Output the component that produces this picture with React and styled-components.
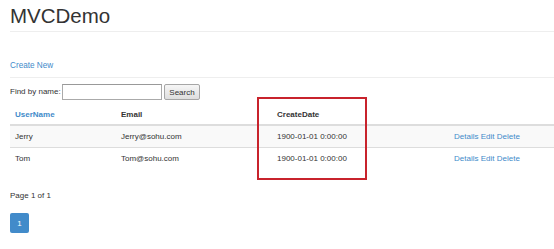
import React from 'react'
import styled, { createGlobalStyle } from 'styled-components';

const GlobalStyle = createGlobalStyle`
    body {
        margin: 0;
        background: #fff;
        font-family: "Liberation Sans", Arial, sans-serif;
        font-size: 8px;
        color: #333;
    }
`

const users = [
    { name: 'Jerry', email: 'Jerry@sohu.com', date: '1900-01-01 0:00:00' },
    { name: 'Tom', email: 'Tom@sohu.com', date: '1900-01-01 0:00:00' },
]

function App() {
    return (
        <Page>
            <GlobalStyle />
            <Title>MVCDemo</Title>
            <Rule />
            <CreateLink href="#">Create New</CreateLink>
            <Rule $top={6} />
            <SearchRow>
                <Label>Find by name:</Label>
                <Input type="text" />
                <Button>Search</Button>
            </SearchRow>
            <Grid>
                <colgroup>
                    <Col $w={106} />
                    <Col $w={156} />
                    <Col $w={177} />
                    <Col />
                </colgroup>
                <thead>
                    <tr>
                        <Th><HeadLink href="#">UserName</HeadLink></Th>
                        <Th>Email</Th>
                        <Th>CreateDate</Th>
                        <Th />
                    </tr>
                </thead>
                <tbody>
                    {users.map((u, i) => (
                        <Row key={u.name} $striped={i % 2 === 0} $first={i === 0}>
                            <Td>{u.name}</Td>
                            <Td>{u.email}</Td>
                            <Td>{u.date}</Td>
                            <Td>
                                <Link href="#">Details</Link> <Link href="#">Edit</Link> <Link href="#">Delete</Link>
                            </Td>
                        </Row>
                    ))}
                </tbody>
            </Grid>
            <PageInfo>Page 1 of 1</PageInfo>
            <Pager>
                <PageButton>1</PageButton>
            </Pager>
            <Highlight />
        </Page>
    )
}

export default App

const Page = styled.div`
    position: relative;
    padding-left: 10px;
    width: 544px;
    height: 249px;
    overflow: hidden;
`
const Title = styled.h1`
    margin: 6px 0 0;
    font-size: 20.5px;
    line-height: 20px;
    font-weight: 400;
    color: #333;
`
const Rule = styled.div`
    margin-top: ${p => p.$top ?? 5}px;
    height: 1px;
    background: #eee;
    margin-right: -10px;
`
const Link = styled.a`
    color: #428bca;
    text-decoration: none;
`
const CreateLink = styled(Link)`
    display: block;
    margin-top: 29px;
    line-height: 10px;
    font-size: 8.2px;
`
const HeadLink = styled(Link)`
    font-weight: bold;
`
const SearchRow = styled.div`
    display: flex;
    align-items: center;
    margin-top: 6px;
    height: 16px;
`
const Label = styled.span`
    width: 52px;
    line-height: 16px;
`
const Input = styled.input`
    box-sizing: border-box;
    width: 100px;
    height: 16px;
    margin: 0;
    padding: 0 2px;
    border: 1px solid #aaa;
    border-top-color: #999;
    font-size: 8px;
`
const Button = styled.button`
    box-sizing: border-box;
    margin-left: 2px;
    width: 36px;
    height: 16px;
    padding: 0;
    font-family: inherit;
    font-size: 8px;
    color: #333;
    background: linear-gradient(#f6f6f6, #dedede);
    border: 1px solid #a6a6a6;
    border-radius: 2px;
`
const Grid = styled.table`
    margin-top: 5px;
    width: 560px;
    table-layout: fixed;
    border-collapse: collapse;
`
const Col = styled.col`
    width: ${p => (p.$w ? `${p.$w}px` : 'auto')};
`
const Th = styled.th`
    text-align: left;
    padding: 4px 5px;
    line-height: 11px;
    font-weight: bold;
    border-bottom: 2px solid #ddd;
`
const Row = styled.tr`
    background: ${p => (p.$striped ? '#f9f9f9' : '#fff')};
    border-top: ${p => (p.$first ? '0' : '1px solid #ddd')};
`
const Td = styled.td`
    padding: 5px;
    line-height: 11px;
    white-space: nowrap;
`
const PageInfo = styled.div`
    margin-top: 22px;
    line-height: 10px;
`
const Pager = styled.div`
    margin-top: 12px;
    display: flex;
`
const PageButton = styled.span`
    width: 19px;
    height: 20px;
    display: flex;
    align-items: center;
    justify-content: center;
    background: #428bca;
    color: #fff;
    border-radius: 2px;
    font-size: 8px;
`
const Highlight = styled.div`
    position: absolute;
    left: 257px;
    top: 97px;
    width: 106px;
    height: 79px;
    border: 2px solid #c8232c;
`
